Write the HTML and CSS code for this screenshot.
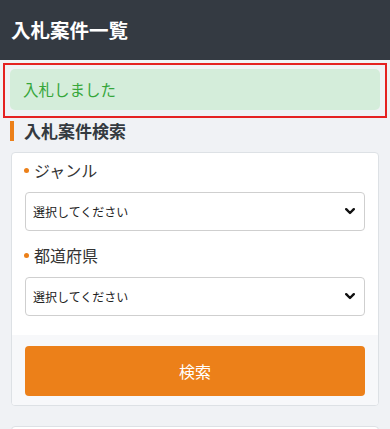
FILE: index.html
```html
<!DOCTYPE html>
<html lang="ja">
<head>
<meta charset="utf-8">
<title>入札案件一覧</title>
<link rel="stylesheet" href="styles.css">
</head>
<body>
<header class="topbar"><h1 class="topbar-title">入札案件一覧</h1></header>
<div class="flash-wrap">
  <div class="alert">入札しました</div>
</div>
<h2 class="section-title">入札案件検索</h2>
<form class="card">
  <div class="card-body">
    <label class="field-label">ジャンル</label>
    <div class="select-wrap">
      <select class="select"><option>選択してください</option></select>
      <svg class="chevron" width="10" height="7" viewBox="0 0 10 7"><path d="M1.2 1.2 L5 5 L8.8 1.2" fill="none" stroke="#111" stroke-width="2.4" stroke-linecap="round" stroke-linejoin="round"/></svg>
    </div>
    <label class="field-label field-label-2">都道府県</label>
    <div class="select-wrap">
      <select class="select"><option>選択してください</option></select>
      <svg class="chevron" width="10" height="7" viewBox="0 0 10 7"><path d="M1.2 1.2 L5 5 L8.8 1.2" fill="none" stroke="#111" stroke-width="2.4" stroke-linecap="round" stroke-linejoin="round"/></svg>
    </div>
  </div>
  <div class="card-footer">
    <button type="button" class="btn">検索</button>
  </div>
</form>
<div class="card card-next"></div>
</body>
</html>
```

FILE: styles.css
```css
* { box-sizing: border-box; }
html, body { margin: 0; padding: 0; }
body {
  background: #f0f2f5;
  font-family: "Noto Sans CJK JP", "Noto Sans", sans-serif;
  color: #333;
  overflow: hidden;
}
.topbar {
  height: 60px;
  background: #343a42;
  display: flex;
  align-items: center;
  padding-left: 11px;
}
.topbar-title {
  margin: 0;
  color: #fff;
  font-size: 19.5px;
  font-weight: 700;
  line-height: 1;
}
.flash-wrap {
  margin: 3px 3px 0;
  border: 2px solid #e52121;
  padding: 4px 5px 6px;
}
.alert {
  height: 41px;
  background: #d4edda;
  border-radius: 5px;
  color: #36a63a;
  font-size: 15.5px;
  line-height: 41px;
  padding-left: 13px;
}
.section-title {
  margin: 3px 0 0 10px;
  border-left: 4px solid #ec8019;
  padding-left: 10px;
  height: 20px;
  line-height: 20px;
  font-size: 17px;
  font-weight: 700;
  color: #343a40;
}
.card {
  margin: 11px 11px 0;
  background: #fff;
  border: 1px solid #dde1e5;
  border-radius: 4px;
  overflow: hidden;
}
.card-body {
  padding: 5px 13px 19px;
}
.field-label {
  display: flex;
  align-items: center;
  height: 24px;
  font-size: 16px;
  color: #333;
  margin-bottom: 10px;
}
.field-label::before {
  content: "";
  width: 5px;
  height: 5px;
  border-radius: 50%;
  background: #ec8019;
  margin: 0 5px 0 -1px;
}
.field-label-2 { margin-top: 12px; }
.select-wrap {
  position: relative;
}
.select {
  display: block;
  width: 100%;
  height: 39px;
  appearance: none;
  -webkit-appearance: none;
  background: #fff;
  border: 1px solid #cfcfcf;
  border-radius: 4px;
  padding: 0 30px 0 7px;
  font-family: "Noto Sans CJK JP", sans-serif;
  font-size: 12px;
  color: #222;
}
.chevron {
  position: absolute;
  right: 10px;
  top: 16px;
  pointer-events: none;
}
.card-footer {
  background: #f7f8fa;
  padding: 11px 13px 9px;
}
.btn {
  display: block;
  width: 100%;
  height: 50px;
  border: 0;
  border-radius: 4px;
  background: #ec8019;
  color: #fff;
  font-family: "Noto Sans CJK JP", sans-serif;
  font-size: 16px;
}
.card-next {
  margin-top: 20px;
  height: 40px;
}
```
